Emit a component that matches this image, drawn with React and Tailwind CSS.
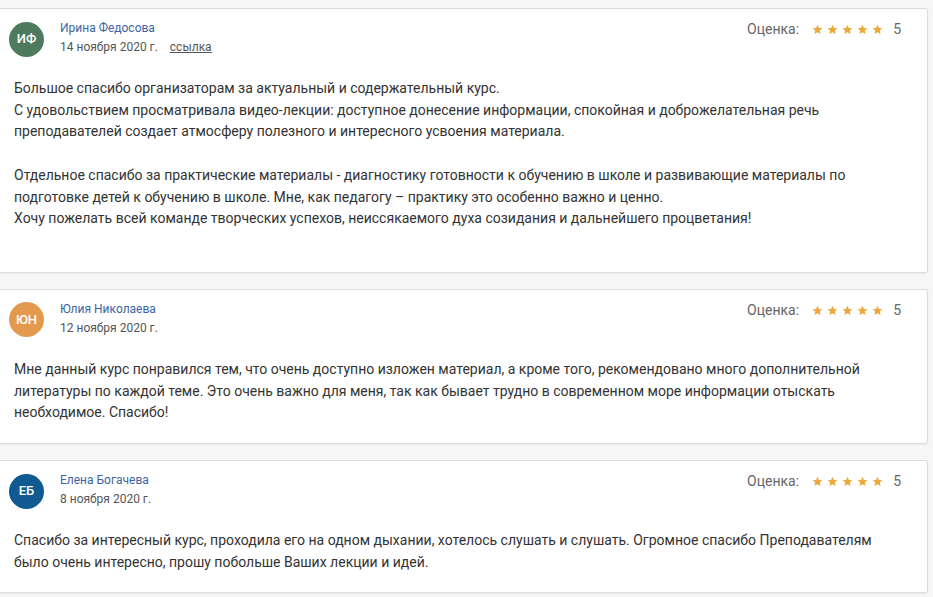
import React from 'react';

const reviews = [
  {
    initials: 'ИФ',
    color: 'bg-[#4e7a5d]',
    name: 'Ирина Федосова',
    date: '14 ноября 2020 г.',
    link: true,
    extra: true,
    paragraphs: [
      [
        'Большое спасибо организаторам за актуальный и содержательный курс.',
        'С удовольствием просматривала видео-лекции: доступное донесение информации, спокойная и доброжелательная речь',
        'преподавателей создает атмосферу полезного и интересного усвоения материала.',
      ],
      [
        'Отдельное спасибо за практические материалы - диагностику готовности к обучению в школе и развивающие материалы по',
        'подготовке детей к обучению в школе. Мне, как педагогу – практику это особенно важно и ценно.',
        'Хочу пожелать всей команде творческих успехов, неиссякаемого духа созидания и дальнейшего процветания!',
      ],
    ],
  },
  {
    initials: 'ЮН',
    color: 'bg-[#e39a4f]',
    name: 'Юлия Николаева',
    date: '12 ноября 2020 г.',
    paragraphs: [
      [
        'Мне данный курс понравился тем, что очень доступно изложен материал, а кроме того, рекомендовано много дополнительной',
        'литературы по каждой теме. Это очень важно для меня, так как бывает трудно в современном море информации отыскать',
        'необходимое. Спасибо!',
      ],
    ],
  },
  {
    initials: 'ЕБ',
    color: 'bg-[#105a91]',
    name: 'Елена Богачева',
    date: '8 ноября 2020 г.',
    paragraphs: [
      [
        'Спасибо за интересный курс, проходила его на одном дыхании, хотелось слушать и слушать. Огромное спасибо Преподавателям',
        'было очень интересно, прошу побольше Ваших лекции и идей.',
      ],
    ],
  },
];

function Star() {
  return (
    <svg width="11" height="11" viewBox="0 0 24 24" className="fill-[#eca83c]">
      <path d="M12 1.5l3.1 7.1 7.7.7-5.8 5.1 1.7 7.6L12 18l-6.7 4 1.7-7.6-5.8-5.1 7.7-.7z" />
    </svg>
  );
}

function Review({ r }) {
  return (
    <div className={`-ml-px mr-[5px] bg-white border border-[#dcdcdc] rounded-r-[3px] shadow-[0_1px_2px_rgba(0,0,0,0.06)] ${r.extra ? 'pb-[42px]' : 'pb-[19px]'}`}>
      <div className="flex items-start justify-between pl-[9px] pr-[26px] pt-[12px]">
        <div className="flex items-center gap-[16px]">
          <div className={`w-[35px] h-[35px] rounded-full ${r.color} text-white flex items-center justify-center text-[13px] font-medium`}>
            {r.initials}
          </div>
          <div className="flex flex-col text-[12px] leading-[19px] -mt-[2px]">
            <span className="text-[#3c65a3]">{r.name}</span>
            <span className="text-[#555]">
              {r.date}
              {r.link && <span className="ml-[12px] underline text-[#555]">ссылка</span>}
            </span>
          </div>
        </div>
        <div className="flex items-center -mt-[2px] text-[14px] text-[#666]">
          <span>Оценка:</span>
          <div className="flex gap-[4px] ml-[13px]">
            <Star /><Star /><Star /><Star /><Star />
          </div>
          <span className="ml-[10px]">5</span>
        </div>
      </div>
      <div className="pl-[14px] pt-[21px] text-[14px] leading-[21.7px] text-[#333] flex flex-col gap-[21.7px]">
        {r.paragraphs.map((p, i) => (
          <p key={i}>
            {p.map((line, j) => (
              <span key={j} className="block whitespace-nowrap">{line}</span>
            ))}
          </p>
        ))}
      </div>
    </div>
  );
}

export default function App() {
  return (
    <div className="w-[933px] h-[597px] overflow-hidden bg-[#f6f6f6] pt-[8px] flex flex-col gap-[16px] font-['Roboto',sans-serif]">
      {reviews.map((r) => (
        <Review key={r.name} r={r} />
      ))}
    </div>
  );
}
